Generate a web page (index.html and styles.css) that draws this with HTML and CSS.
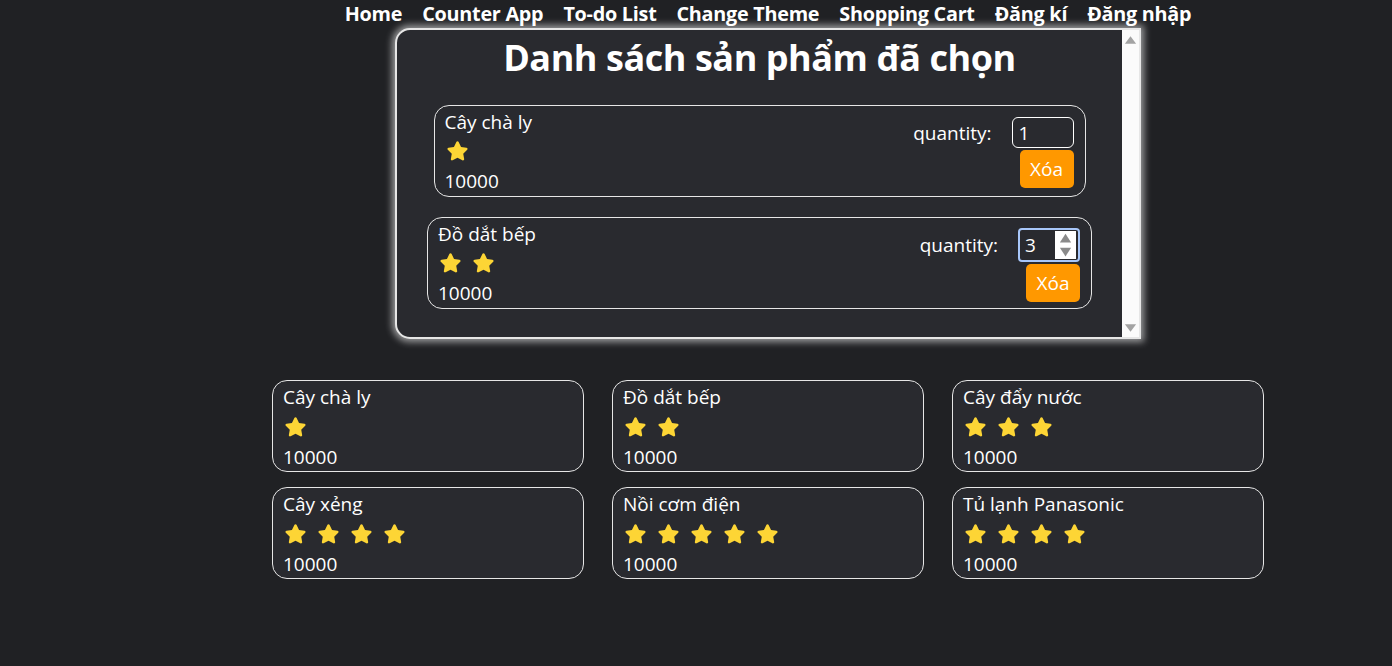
FILE: index.html
```html
<!DOCTYPE html>
<html lang="vi">
<head>
<meta charset="utf-8">
<title>Shopping Cart</title>
<link rel="stylesheet" href="styles.css">
</head>
<body>
<div class="page">
  <nav class="nav">
    <a href="#">Home</a>
    <a href="#">Counter App</a>
    <a href="#">To-do List</a>
    <a href="#">Change Theme</a>
    <a href="#">Shopping Cart</a>
    <a href="#">Đăng kí</a>
    <a href="#">Đăng nhập</a>
  </nav>

  <section class="modal">
    <div class="modal-body">
      <h1 class="title">Danh sách sản phẩm đã chọn</h1>

      <div class="cart-item cart-item-a">
        <div class="info">
          <div class="name">Cây chà ly</div>
          <div class="stars">
            <svg class="star" viewBox="0 0 24 24"><path d="M12 2.2c.5 0 .9.3 1.1.7l2.3 4.7 5.2.8c1 .1 1.4 1.3.7 2l-3.8 3.7.9 5.2c.2 1-.9 1.7-1.7 1.2L12 18.1l-4.7 2.4c-.9.5-1.9-.3-1.7-1.2l.9-5.2-3.8-3.7c-.7-.7-.3-1.9.7-2l5.2-.8 2.3-4.7c.2-.4.6-.7 1.1-.7z"/></svg>
          </div>
          <div class="price">10000</div>
        </div>
        <div class="controls">
          <div class="qty-row">
            <span class="qty-label">quantity:</span>
            <input class="qty" type="text" value="1">
          </div>
          <button class="remove">Xóa</button>
        </div>
      </div>

      <div class="cart-item cart-item-b">
        <div class="info">
          <div class="name">Đồ dắt bếp</div>
          <div class="stars">
            <svg class="star" viewBox="0 0 24 24"><path d="M12 2.2c.5 0 .9.3 1.1.7l2.3 4.7 5.2.8c1 .1 1.4 1.3.7 2l-3.8 3.7.9 5.2c.2 1-.9 1.7-1.7 1.2L12 18.1l-4.7 2.4c-.9.5-1.9-.3-1.7-1.2l.9-5.2-3.8-3.7c-.7-.7-.3-1.9.7-2l5.2-.8 2.3-4.7c.2-.4.6-.7 1.1-.7z"/></svg>
            <svg class="star" viewBox="0 0 24 24"><path d="M12 2.2c.5 0 .9.3 1.1.7l2.3 4.7 5.2.8c1 .1 1.4 1.3.7 2l-3.8 3.7.9 5.2c.2 1-.9 1.7-1.7 1.2L12 18.1l-4.7 2.4c-.9.5-1.9-.3-1.7-1.2l.9-5.2-3.8-3.7c-.7-.7-.3-1.9.7-2l5.2-.8 2.3-4.7c.2-.4.6-.7 1.1-.7z"/></svg>
          </div>
          <div class="price">10000</div>
        </div>
        <div class="controls controls-focus">
          <div class="qty-row">
            <span class="qty-label">quantity:</span>
            <div class="qty qty-focus">
              <span class="qty-value">3</span>
              <span class="spin">
                <svg class="spin-arrow" viewBox="0 0 10 8"><path d="M5 0.5 L9.5 7.5 L0.5 7.5 Z"/></svg>
                <svg class="spin-arrow" viewBox="0 0 10 8"><path d="M0.5 0.5 L9.5 0.5 L5 7.5 Z"/></svg>
              </span>
            </div>
          </div>
          <button class="remove">Xóa</button>
        </div>
      </div>
    </div>
    <div class="scrollbar">
      <svg class="sb-arrow" viewBox="0 0 10 8"><path d="M5 1 L9.5 7 L0.5 7 Z"/></svg>
      <svg class="sb-arrow" viewBox="0 0 10 8"><path d="M0.5 1 L9.5 1 L5 7 Z"/></svg>
    </div>
  </section>

  <section class="grid">
    <div class="card">
      <div class="name">Cây chà ly</div>
      <div class="stars">
        <svg class="star" viewBox="0 0 24 24"><path d="M12 2.2c.5 0 .9.3 1.1.7l2.3 4.7 5.2.8c1 .1 1.4 1.3.7 2l-3.8 3.7.9 5.2c.2 1-.9 1.7-1.7 1.2L12 18.1l-4.7 2.4c-.9.5-1.9-.3-1.7-1.2l.9-5.2-3.8-3.7c-.7-.7-.3-1.9.7-2l5.2-.8 2.3-4.7c.2-.4.6-.7 1.1-.7z"/></svg>
      </div>
      <div class="price">10000</div>
    </div>
    <div class="card">
      <div class="name">Đồ dắt bếp</div>
      <div class="stars">
        <svg class="star" viewBox="0 0 24 24"><path d="M12 2.2c.5 0 .9.3 1.1.7l2.3 4.7 5.2.8c1 .1 1.4 1.3.7 2l-3.8 3.7.9 5.2c.2 1-.9 1.7-1.7 1.2L12 18.1l-4.7 2.4c-.9.5-1.9-.3-1.7-1.2l.9-5.2-3.8-3.7c-.7-.7-.3-1.9.7-2l5.2-.8 2.3-4.7c.2-.4.6-.7 1.1-.7z"/></svg>
        <svg class="star" viewBox="0 0 24 24"><path d="M12 2.2c.5 0 .9.3 1.1.7l2.3 4.7 5.2.8c1 .1 1.4 1.3.7 2l-3.8 3.7.9 5.2c.2 1-.9 1.7-1.7 1.2L12 18.1l-4.7 2.4c-.9.5-1.9-.3-1.7-1.2l.9-5.2-3.8-3.7c-.7-.7-.3-1.9.7-2l5.2-.8 2.3-4.7c.2-.4.6-.7 1.1-.7z"/></svg>
      </div>
      <div class="price">10000</div>
    </div>
    <div class="card">
      <div class="name">Cây đẩy nước</div>
      <div class="stars">
        <svg class="star" viewBox="0 0 24 24"><path d="M12 2.2c.5 0 .9.3 1.1.7l2.3 4.7 5.2.8c1 .1 1.4 1.3.7 2l-3.8 3.7.9 5.2c.2 1-.9 1.7-1.7 1.2L12 18.1l-4.7 2.4c-.9.5-1.9-.3-1.7-1.2l.9-5.2-3.8-3.7c-.7-.7-.3-1.9.7-2l5.2-.8 2.3-4.7c.2-.4.6-.7 1.1-.7z"/></svg>
        <svg class="star" viewBox="0 0 24 24"><path d="M12 2.2c.5 0 .9.3 1.1.7l2.3 4.7 5.2.8c1 .1 1.4 1.3.7 2l-3.8 3.7.9 5.2c.2 1-.9 1.7-1.7 1.2L12 18.1l-4.7 2.4c-.9.5-1.9-.3-1.7-1.2l.9-5.2-3.8-3.7c-.7-.7-.3-1.9.7-2l5.2-.8 2.3-4.7c.2-.4.6-.7 1.1-.7z"/></svg>
        <svg class="star" viewBox="0 0 24 24"><path d="M12 2.2c.5 0 .9.3 1.1.7l2.3 4.7 5.2.8c1 .1 1.4 1.3.7 2l-3.8 3.7.9 5.2c.2 1-.9 1.7-1.7 1.2L12 18.1l-4.7 2.4c-.9.5-1.9-.3-1.7-1.2l.9-5.2-3.8-3.7c-.7-.7-.3-1.9.7-2l5.2-.8 2.3-4.7c.2-.4.6-.7 1.1-.7z"/></svg>
      </div>
      <div class="price">10000</div>
    </div>
    <div class="card">
      <div class="name">Cây xẻng</div>
      <div class="stars">
        <svg class="star" viewBox="0 0 24 24"><path d="M12 2.2c.5 0 .9.3 1.1.7l2.3 4.7 5.2.8c1 .1 1.4 1.3.7 2l-3.8 3.7.9 5.2c.2 1-.9 1.7-1.7 1.2L12 18.1l-4.7 2.4c-.9.5-1.9-.3-1.7-1.2l.9-5.2-3.8-3.7c-.7-.7-.3-1.9.7-2l5.2-.8 2.3-4.7c.2-.4.6-.7 1.1-.7z"/></svg>
        <svg class="star" viewBox="0 0 24 24"><path d="M12 2.2c.5 0 .9.3 1.1.7l2.3 4.7 5.2.8c1 .1 1.4 1.3.7 2l-3.8 3.7.9 5.2c.2 1-.9 1.7-1.7 1.2L12 18.1l-4.7 2.4c-.9.5-1.9-.3-1.7-1.2l.9-5.2-3.8-3.7c-.7-.7-.3-1.9.7-2l5.2-.8 2.3-4.7c.2-.4.6-.7 1.1-.7z"/></svg>
        <svg class="star" viewBox="0 0 24 24"><path d="M12 2.2c.5 0 .9.3 1.1.7l2.3 4.7 5.2.8c1 .1 1.4 1.3.7 2l-3.8 3.7.9 5.2c.2 1-.9 1.7-1.7 1.2L12 18.1l-4.7 2.4c-.9.5-1.9-.3-1.7-1.2l.9-5.2-3.8-3.7c-.7-.7-.3-1.9.7-2l5.2-.8 2.3-4.7c.2-.4.6-.7 1.1-.7z"/></svg>
        <svg class="star" viewBox="0 0 24 24"><path d="M12 2.2c.5 0 .9.3 1.1.7l2.3 4.7 5.2.8c1 .1 1.4 1.3.7 2l-3.8 3.7.9 5.2c.2 1-.9 1.7-1.7 1.2L12 18.1l-4.7 2.4c-.9.5-1.9-.3-1.7-1.2l.9-5.2-3.8-3.7c-.7-.7-.3-1.9.7-2l5.2-.8 2.3-4.7c.2-.4.6-.7 1.1-.7z"/></svg>
      </div>
      <div class="price">10000</div>
    </div>
    <div class="card">
      <div class="name">Nồi cơm điện</div>
      <div class="stars">
        <svg class="star" viewBox="0 0 24 24"><path d="M12 2.2c.5 0 .9.3 1.1.7l2.3 4.7 5.2.8c1 .1 1.4 1.3.7 2l-3.8 3.7.9 5.2c.2 1-.9 1.7-1.7 1.2L12 18.1l-4.7 2.4c-.9.5-1.9-.3-1.7-1.2l.9-5.2-3.8-3.7c-.7-.7-.3-1.9.7-2l5.2-.8 2.3-4.7c.2-.4.6-.7 1.1-.7z"/></svg>
        <svg class="star" viewBox="0 0 24 24"><path d="M12 2.2c.5 0 .9.3 1.1.7l2.3 4.7 5.2.8c1 .1 1.4 1.3.7 2l-3.8 3.7.9 5.2c.2 1-.9 1.7-1.7 1.2L12 18.1l-4.7 2.4c-.9.5-1.9-.3-1.7-1.2l.9-5.2-3.8-3.7c-.7-.7-.3-1.9.7-2l5.2-.8 2.3-4.7c.2-.4.6-.7 1.1-.7z"/></svg>
        <svg class="star" viewBox="0 0 24 24"><path d="M12 2.2c.5 0 .9.3 1.1.7l2.3 4.7 5.2.8c1 .1 1.4 1.3.7 2l-3.8 3.7.9 5.2c.2 1-.9 1.7-1.7 1.2L12 18.1l-4.7 2.4c-.9.5-1.9-.3-1.7-1.2l.9-5.2-3.8-3.7c-.7-.7-.3-1.9.7-2l5.2-.8 2.3-4.7c.2-.4.6-.7 1.1-.7z"/></svg>
        <svg class="star" viewBox="0 0 24 24"><path d="M12 2.2c.5 0 .9.3 1.1.7l2.3 4.7 5.2.8c1 .1 1.4 1.3.7 2l-3.8 3.7.9 5.2c.2 1-.9 1.7-1.7 1.2L12 18.1l-4.7 2.4c-.9.5-1.9-.3-1.7-1.2l.9-5.2-3.8-3.7c-.7-.7-.3-1.9.7-2l5.2-.8 2.3-4.7c.2-.4.6-.7 1.1-.7z"/></svg>
        <svg class="star" viewBox="0 0 24 24"><path d="M12 2.2c.5 0 .9.3 1.1.7l2.3 4.7 5.2.8c1 .1 1.4 1.3.7 2l-3.8 3.7.9 5.2c.2 1-.9 1.7-1.7 1.2L12 18.1l-4.7 2.4c-.9.5-1.9-.3-1.7-1.2l.9-5.2-3.8-3.7c-.7-.7-.3-1.9.7-2l5.2-.8 2.3-4.7c.2-.4.6-.7 1.1-.7z"/></svg>
      </div>
      <div class="price">10000</div>
    </div>
    <div class="card">
      <div class="name">Tủ lạnh Panasonic</div>
      <div class="stars">
        <svg class="star" viewBox="0 0 24 24"><path d="M12 2.2c.5 0 .9.3 1.1.7l2.3 4.7 5.2.8c1 .1 1.4 1.3.7 2l-3.8 3.7.9 5.2c.2 1-.9 1.7-1.7 1.2L12 18.1l-4.7 2.4c-.9.5-1.9-.3-1.7-1.2l.9-5.2-3.8-3.7c-.7-.7-.3-1.9.7-2l5.2-.8 2.3-4.7c.2-.4.6-.7 1.1-.7z"/></svg>
        <svg class="star" viewBox="0 0 24 24"><path d="M12 2.2c.5 0 .9.3 1.1.7l2.3 4.7 5.2.8c1 .1 1.4 1.3.7 2l-3.8 3.7.9 5.2c.2 1-.9 1.7-1.7 1.2L12 18.1l-4.7 2.4c-.9.5-1.9-.3-1.7-1.2l.9-5.2-3.8-3.7c-.7-.7-.3-1.9.7-2l5.2-.8 2.3-4.7c.2-.4.6-.7 1.1-.7z"/></svg>
        <svg class="star" viewBox="0 0 24 24"><path d="M12 2.2c.5 0 .9.3 1.1.7l2.3 4.7 5.2.8c1 .1 1.4 1.3.7 2l-3.8 3.7.9 5.2c.2 1-.9 1.7-1.7 1.2L12 18.1l-4.7 2.4c-.9.5-1.9-.3-1.7-1.2l.9-5.2-3.8-3.7c-.7-.7-.3-1.9.7-2l5.2-.8 2.3-4.7c.2-.4.6-.7 1.1-.7z"/></svg>
        <svg class="star" viewBox="0 0 24 24"><path d="M12 2.2c.5 0 .9.3 1.1.7l2.3 4.7 5.2.8c1 .1 1.4 1.3.7 2l-3.8 3.7.9 5.2c.2 1-.9 1.7-1.7 1.2L12 18.1l-4.7 2.4c-.9.5-1.9-.3-1.7-1.2l.9-5.2-3.8-3.7c-.7-.7-.3-1.9.7-2l5.2-.8 2.3-4.7c.2-.4.6-.7 1.1-.7z"/></svg>
      </div>
      <div class="price">10000</div>
    </div>
  </section>
</div>
</body>
</html>
```

FILE: styles.css
```css
* { box-sizing: border-box; }

html, body {
  margin: 0;
  background: #202124;
  color: #ffffff;
  font-family: "Open Sans", "Noto Sans", sans-serif;
}

.page {
  padding-left: 144px;
  display: flex;
  flex-direction: column;
  align-items: center;
  height: 666px;
  overflow: hidden;
}

.nav {
  display: flex;
  gap: 20px;
  height: 28px;
  align-items: center;
  font-weight: 700;
  font-size: 19.8px;
  letter-spacing: -0.25px;
}

.nav a {
  color: #ffffff;
  text-decoration: none;
  line-height: 26px;
}

.modal {
  width: 746px;
  height: 311px;
  display: flex;
  background: #292a2f;
  border: 2px solid #e6e6e6;
  border-radius: 15px 0 0 15px;
  box-shadow: 0 0 7px 3px rgba(255, 255, 255, 0.55);
}

.modal-body {
  flex: 1;
  display: flex;
  flex-direction: column;
  align-items: center;
  padding-top: 5px;
}

.title {
  margin: 0 0 24px;
  font-size: 36px;
  font-weight: 700;
  line-height: 46px;
  letter-spacing: -0.45px;
}

.scrollbar {
  width: 17px;
  background: #fbfbfb;
  display: flex;
  flex-direction: column;
  justify-content: space-between;
  align-items: center;
  padding: 5px 0 4px;
}

.sb-arrow {
  width: 13px;
  height: 10px;
  fill: #a3a3a3;
}

.cart-item {
  display: flex;
  justify-content: space-between;
  border: 1px solid #e6e6e6;
  border-radius: 15px;
  padding: 1px 11px 0 10px;
  height: 92px;
  margin-bottom: 20px;
}

.cart-item-a { width: 652px; }
.cart-item-b { width: 665px; }

.info {
  display: flex;
  flex-direction: column;
}

.name, .price {
  font-size: 19px;
  line-height: 30px;
}

.stars {
  display: flex;
  height: 30px;
  align-items: center;
  gap: 8px;
}

.star {
  width: 25px;
  height: 25px;
  fill: #fdd535;
}

.controls {
  display: flex;
  flex-direction: column;
  align-items: flex-end;
  padding-top: 10px;
}

.controls-focus {
  padding-top: 9px;
}

.qty-row {
  display: flex;
  align-items: center;
  gap: 20px;
}

.qty-label {
  font-size: 19px;
}

.qty {
  width: 62px;
  height: 31px;
  border: 1px solid #ffffff;
  border-radius: 6px;
  background: transparent;
  color: #ffffff;
  font-family: inherit;
  font-size: 19px;
  padding: 0 6px;
  margin: 0;
  outline: none;
}

.qty-focus {
  display: flex;
  align-items: stretch;
  justify-content: space-between;
  height: 34px;
  border: 2px solid #a8c7fa;
  border-radius: 4px;
  padding: 0 2px 0 5px;
}

.qty-value {
  display: flex;
  align-items: center;
}

.spin {
  width: 21px;
  background: #ffffff;
  display: flex;
  flex-direction: column;
  justify-content: space-around;
  align-items: center;
  margin: 1px 0;
}

.spin-arrow {
  width: 13px;
  height: 10px;
  fill: #8a8a8a;
}

.remove {
  margin-top: 2px;
  width: 54px;
  height: 38px;
  background: #ff9800;
  color: #ffffff;
  border: none;
  border-radius: 5px;
  font-family: inherit;
  font-size: 19px;
  padding: 0;
}

.grid {
  margin-top: 41px;
  display: grid;
  grid-template-columns: repeat(3, 312px);
  column-gap: 28px;
  row-gap: 15px;
}

.card {
  height: 92px;
  border: 1px solid #e6e6e6;
  border-radius: 15px;
  background: #292a2f;
  padding: 1px 10px 0;
}
```
